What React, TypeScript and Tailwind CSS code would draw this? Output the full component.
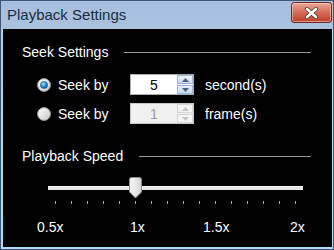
import React from "react";

const font = { fontFamily: '"Liberation Sans", Arial, sans-serif' };

function Radio({ checked }: { checked: boolean }) {
  return (
    <svg width="14" height="14" viewBox="0 0 14 14">
      <defs>
        <linearGradient id="rg-off" x1="0" y1="0" x2="1" y2="1">
          <stop offset="0" stopColor="#ffffff" />
          <stop offset="1" stopColor="#c9c9c9" />
        </linearGradient>
        <radialGradient id="rg-dot" cx="0.4" cy="0.35" r="0.7">
          <stop offset="0" stopColor="#bfe9ff" />
          <stop offset="0.5" stopColor="#2a8fd0" />
          <stop offset="1" stopColor="#0b4f8a" />
        </radialGradient>
      </defs>
      <circle cx="7" cy="7" r="6.5" fill="url(#rg-off)" stroke="#8e8f8f" strokeWidth="1" />
      {checked && <circle cx="7" cy="7" r="3.6" fill="url(#rg-dot)" stroke="#1a5c96" strokeWidth="0.6" />}
    </svg>
  );
}

function Arrow({ up, color }: { up: boolean; color: string }) {
  return (
    <svg width="7" height="4" viewBox="0 0 7 4">
      {up ? <polygon points="0,4 7,4 3.5,0" fill={color} /> : <polygon points="0,0 7,0 3.5,4" fill={color} />}
    </svg>
  );
}

function Spin({ value, disabled }: { value: string; disabled?: boolean }) {
  return (
    <div
      className={
        "w-[64px] h-[21px] flex border " +
        (disabled ? "bg-[#f0f0f0] border-[#c8c8c8]" : "bg-white border-[#abadb3]")
      }
    >
      <div
        className={"flex-1 flex items-center justify-center text-[14px] leading-[16px] " + (disabled ? "text-[#9a9a9a]" : "text-black")}
        style={font}
      >
        {value}
      </div>
      <div className="w-[16px] flex flex-col gap-[1px] py-[0px] pr-[0px]">
        <div
          className={
            "flex-1 flex items-center justify-center border " +
            (disabled ? "border-[#d7d7d7] bg-[#f4f4f4]" : "border-[#9db4d4] bg-gradient-to-b from-[#eef4fb] to-[#c9daf0]")
          }
        >
          <Arrow up color={disabled ? "#c4c4c4" : "#4b6186"} />
        </div>
        <div
          className={
            "flex-1 flex items-center justify-center border " +
            (disabled ? "border-[#d7d7d7] bg-[#f4f4f4]" : "border-[#9db4d4] bg-gradient-to-b from-[#e6eef8] to-[#c9daf0]")
          }
        >
          <Arrow up={false} color={disabled ? "#c4c4c4" : "#4b6186"} />
        </div>
      </div>
    </div>
  );
}

function Thumb() {
  return (
    <svg width="13" height="22" viewBox="0 0 13 22">
      <defs>
        <linearGradient id="th" x1="0" y1="0" x2="1" y2="0">
          <stop offset="0" stopColor="#f6f6f6" />
          <stop offset="0.5" stopColor="#e8e8e8" />
          <stop offset="1" stopColor="#cfcfcf" />
        </linearGradient>
      </defs>
      <path d="M0.5 2.5 Q0.5 0.5 2.5 0.5 L10.5 0.5 Q12.5 0.5 12.5 2.5 L12.5 15 L6.5 21 L0.5 15 Z" fill="url(#th)" stroke="#8c8c8c" strokeWidth="1" />
    </svg>
  );
}

export default function App() {
  const ticks = Array.from({ length: 16 });
  return (
    <div className="w-[334px] h-[250px] flex flex-col border border-[#3d5676] bg-gradient-to-b from-[#a7bfdc] to-[#c0d5ec] overflow-hidden" style={font}>
      <div className="h-[28px] flex items-center justify-between pl-[6px] shrink-0">
        <span className="text-[15px] leading-[18px] text-[#1a2c44] mt-[-1px]">Playback Settings</span>
        <div className="w-[41px] h-[21px] mt-[-5px] mr-[1px] rounded-[3px] border border-[#6e2a1e] bg-gradient-to-b from-[#e9ab9b] via-[#d46a55] to-[#c0402a] flex items-center justify-center shadow-[inset_0_0_0_1px_rgba(255,220,210,0.5)]">
          <svg width="15" height="12" viewBox="0 0 15 12">
            <path d="M3 2 L12 10 M12 2 L3 10" stroke="#5a3a35" strokeWidth="4.2" strokeLinecap="round" />
            <path d="M3 2 L12 10 M12 2 L3 10" stroke="#ffffff" strokeWidth="2.6" strokeLinecap="round" />
          </svg>
        </div>
      </div>
      <div className="flex-1 ml-[1px] mb-[1px] bg-black border-l border-r border-b border-[#a9dff5] flex flex-col pt-[15px] pl-[19px] pr-[21px] text-white">
        <div className="h-[16px] flex items-center">
          <span className="text-[14px] leading-[16px]">Seek Settings</span>
          <div className="flex-1 h-px bg-[#9a9a9a] ml-[16px]" />
        </div>

        <div className="mt-[14px] h-[21px] flex items-center">
          <div className="w-[108px] flex items-center pl-[15px]">
            <Radio checked />
            <span className="ml-[7px] text-[14px] leading-[16px]">Seek by</span>
          </div>
          <Spin value="5" />
          <span className="ml-[11px] text-[14px] leading-[16px]">second(s)</span>
        </div>

        <div className="mt-[8px] h-[21px] flex items-center">
          <div className="w-[108px] flex items-center pl-[15px]">
            <Radio checked={false} />
            <span className="ml-[7px] text-[14px] leading-[16px]">Seek by</span>
          </div>
          <Spin value="1" disabled />
          <span className="ml-[11px] text-[14px] leading-[16px]">frame(s)</span>
        </div>

        <div className="mt-[24px] h-[16px] flex items-center">
          <span className="text-[14px] leading-[16px]">Playback Speed</span>
          <div className="flex-1 h-px bg-[#9a9a9a] ml-[16px]" />
        </div>

        <div className="mt-[13px] h-[22px] relative ml-[26px] w-[255px]">
          <div className="absolute left-0 right-0 top-[9px] h-[4px] bg-[#e4e6e6] border-t border-[#f8f8f8]" />
          <div className="absolute left-[81px] top-0">
            <Thumb />
          </div>
        </div>

        <div className="mt-[2px] h-[3px] ml-[33px] w-[241px] flex justify-between">
          {ticks.map((_, i) => (
            <div key={i} className="w-px h-[3px] bg-[#a8a8a8]" />
          ))}
        </div>

        <div className="mt-[15px] h-[16px] flex text-[14px] leading-[16px]">
          <span className="ml-[15px] w-[27px]">0.5x</span>
          <span className="ml-[66px] w-[15px]">1x</span>
          <span className="ml-[58px] w-[27px]">1.5x</span>
          <span className="ml-[60px]">2x</span>
        </div>
      </div>
    </div>
  );
}
